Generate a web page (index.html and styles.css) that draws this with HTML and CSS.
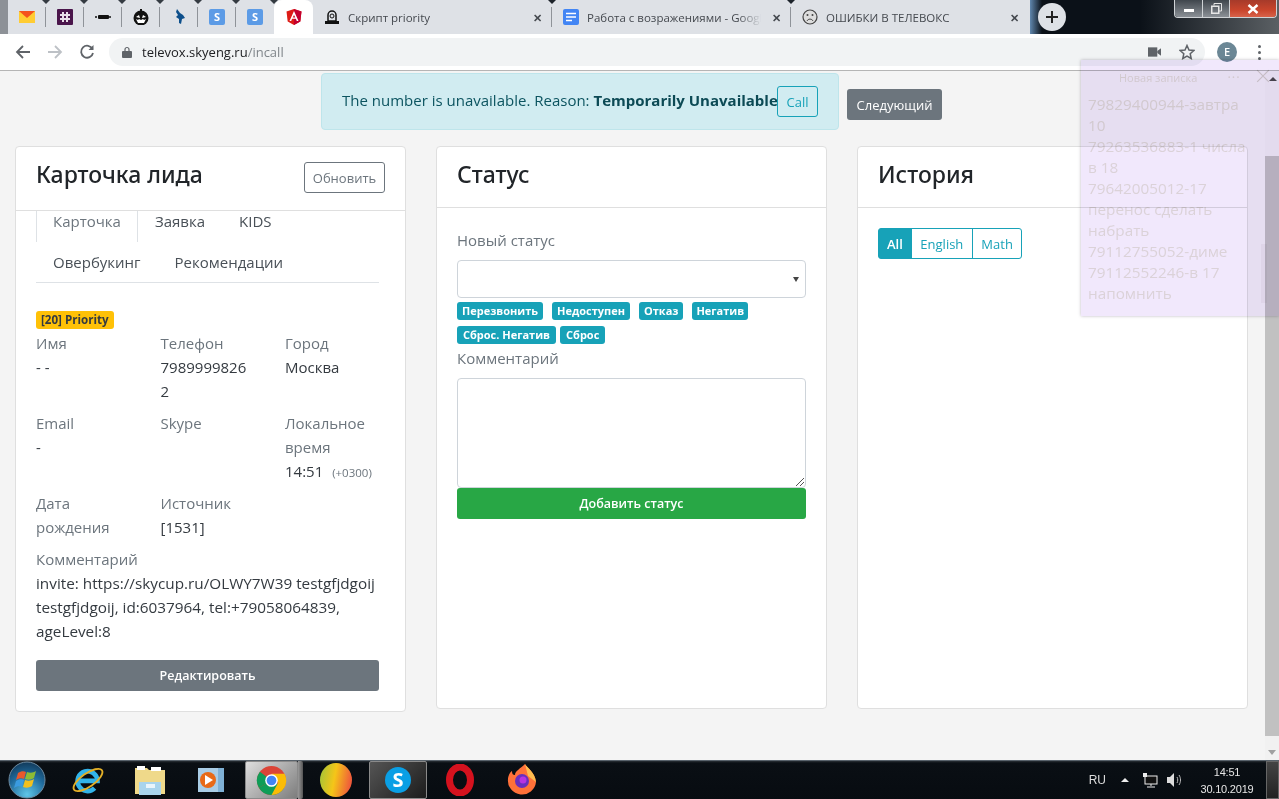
FILE: index.html
```html
<!DOCTYPE html>
<html lang="ru">
<head>
<meta charset="utf-8">
<title>televox</title>
<link rel="stylesheet" href="styles.css">
</head>
<body>
<div class="screen">
  <header class="tabstrip">
    <div class="pinned first"><svg class="fav" viewBox="0 0 16 16"><rect y="2" width="16" height="12" fill="#ffcc33"/><path d="M0 2h16L8 9z" fill="#f4511e"/></svg></div>
    <div class="pinned"><svg class="fav" viewBox="0 0 16 16"><rect width="16" height="16" rx="1" fill="#4a154b"/><path d="M3 6h10M3 10h10M6 3v10M10 3v10" stroke="#e8dfe8" stroke-width="2"/></svg></div>
    <div class="pinned"><svg class="fav" viewBox="0 0 16 16"><rect x="3" y="6" width="11" height="4" rx="1" fill="#111"/><path d="M0 8h2M14 8h2" stroke="#111" stroke-width="1.5"/></svg></div>
    <div class="pinned"><svg class="fav" viewBox="0 0 16 16"><circle cx="8" cy="9" r="7.5" fill="#111"/><path d="M3 8l3-2 1 3zM13 8l-3-2-1 3zM3 10l2 1 1-1 2 1 2-1 1 1 2-1-2 4H5z" fill="#fff"/><path d="M7 0h2v2H7z" fill="#111"/></svg></div>
    <div class="pinned"><svg class="fav" viewBox="0 0 16 16"><path d="M6 0l3 4 3 2 2 3-3 1-1 5-2-1 0-4-3-2 2-2-2-3z" fill="#0d4f8b"/></svg></div>
    <div class="pinned"><svg class="fav" viewBox="0 0 16 16"><rect width="16" height="16" rx="2" fill="#5c9be6"/><text class="s-letter" x="8" y="12">S</text></svg></div>
    <div class="pinned last"><svg class="fav" viewBox="0 0 16 16"><rect width="16" height="16" rx="2" fill="#5c9be6"/><text class="s-letter" x="8" y="12">S</text></svg></div>
    <div class="active-tab"><svg class="fav" viewBox="0 0 16 16"><path d="M8 0l7.500 2.600-1.200 10L8 16l-6.300-3.400-1.200-10z" fill="#dd1b16"/><path d="M8 0l7.500 2.600-1.200 10L8 16z" fill="#c3002f"/><path d="M8 2L3.500 12h1.700l.9-2.300h3.800l.9 2.300h1.700zM8 5.900l1.300 2.600H6.700z" fill="#fff"/></svg></div>
    <div class="tab tab-a"><svg class="fav" viewBox="0 0 16 16"><path d="M4 12V6a4 4 0 0 1 8 0v6z" fill="none" stroke="#111" stroke-width="1.500"/><circle cx="8" cy="7" r="2" fill="none" stroke="#111"/><rect x="1" y="12" width="14" height="3" fill="#111"/></svg><span class="tab-title">Скрипт priority</span><span class="tab-x">✕</span></div>
    <div class="tab tab-b"><svg class="fav" viewBox="0 0 16 16"><rect width="16" height="16" rx="2" fill="#4285f4"/><path d="M3 4.500h10M3 8h10M3 11.500h6" stroke="#fff" stroke-width="1.500"/></svg><span class="tab-title fade">Работа с возражениями - Google</span><span class="tab-x">✕</span></div>
    <div class="tab tab-c"><svg class="fav" viewBox="0 0 16 16"><circle cx="8" cy="8" r="7" fill="#ddd" stroke="#444" stroke-width="1.200"/><circle cx="5.500" cy="6" r="1" fill="#444"/><circle cx="10.500" cy="6" r="1" fill="#444"/><path d="M5 12c1-2.500 5-2.500 6 0" fill="none" stroke="#444"/></svg><span class="tab-title">ОШИБКИ В ТЕЛЕВОКС</span><span class="tab-x">✕</span></div>
    <div class="newtab"><svg viewBox="0 0 14 14" width="14" height="14"><path d="M7 1v12M1 7h12" stroke="#222" stroke-width="2"/></svg></div>
    <div class="winctl">
      <span class="wbtn wb-min"><i class="wmin"></i></span>
      <span class="wbtn wb-max"><svg viewBox="0 0 11 11" width="11" height="11"><path d="M3 2.500V.5h7.500V8H8" fill="none" stroke="#e6e6e6"/><rect x=".75" y="3.250" width="7" height="7" fill="none" stroke="#e6e6e6" stroke-width="1.500"/></svg></span>
      <span class="wbtn wclose"><svg viewBox="0 0 12 10" width="12" height="10"><path d="M1.500 1l9 8M10.500 1l-9 8" stroke="#fff" stroke-width="2.400"/></svg></span>
    </div>
  </header>

  <nav class="toolbar">
    <svg class="navicon" viewBox="0 0 16 16"><path d="M15 8H2M8 2L2 8l6 6" fill="none" stroke="#5f6368" stroke-width="1.800"/></svg>
    <svg class="navicon" viewBox="0 0 16 16"><path d="M1 8h13M8 2l6 6-6 6" fill="none" stroke="#bdc1c6" stroke-width="1.800"/></svg>
    <svg class="navicon" viewBox="0 0 16 16"><path d="M13.500 5A6 6 0 1 0 14 9" fill="none" stroke="#5f6368" stroke-width="1.800"/><path d="M14.500 1v5h-5z" fill="#5f6368"/></svg>
    <div class="omnibox">
      <svg class="lock" viewBox="0 0 10 12"><path d="M3 5V3.500a2 2 0 0 1 4 0V5" fill="none" stroke="#5f6368" stroke-width="1.200"/><rect y="5" width="10" height="7" rx="1" fill="#5f6368"/></svg>
      <span class="url"><b>televox.skyeng.ru</b>/incall</span>
      <svg class="cam" viewBox="0 0 14 10"><rect width="10" height="10" fill="#5f6368"/><path d="M10 4l4-3v8l-4-3z" fill="#5f6368"/></svg>
      <svg class="star" viewBox="0 0 16 16"><path d="M8 1.500l2 4.500 4.800.5-3.600 3.200 1 4.800L8 12l-4.200 2.500 1-4.800L1.200 6.500 6 6z" fill="none" stroke="#5f6368" stroke-width="1.500"/></svg>
    </div>
    <span class="avatar">E</span>
    <span class="dots"><i></i><i></i><i></i></span>
  </nav>

  <div class="viewport">
    <main class="page">
      <div class="alert-row">
        <div class="alert"><span>The number is unavailable. Reason: <b>Temporarily Unavailable</b></span><button class="btn-call">Call</button></div>
        <button class="btn-next">Следующий</button>
      </div>
      <div class="columns">
        <section class="card card-lead">
          <div class="card-head"><h2>Карточка лида</h2><button class="btn-refresh">Обновить</button></div>
          <div class="lead-body">
            <ul class="tabs">
              <li class="on">Карточка</li><li>Заявка</li><li>KIDS</li><li>Овербукинг</li><li>Рекомендации</li>
            </ul>
            <span class="prio">[20] Priority</span>
            <div class="fields">
              <div><label>Имя</label><p>- -</p></div>
              <div><label>Телефон</label><p>7989999826<br>2</p></div>
              <div><label>Город</label><p>Москва</p></div>
              <div><label>Email</label><p>-</p></div>
              <div><label>Skype</label></div>
              <div><label>Локальное время</label><p class="nowrap">14:51 <small>(+0300)</small></p></div>
              <div><label>Дата рождения</label></div>
              <div><label>Источник</label><p>[1531]</p></div>
            </div>
            <label>Комментарий</label>
            <p class="comment">invite: https://skycup.ru/OLWY7W39 testgfjdgoij testgfjdgoij, id:6037964, tel:+79058064839, ageLevel:8</p>
            <button class="btn-edit">Редактировать</button>
          </div>
        </section>
        <section class="card">
          <div class="card-head plain"><h2>Статус</h2></div>
          <div class="status-body">
            <label>Новый статус</label>
            <div class="select"></div>
            <div class="badges">
              <span>Перезвонить</span><span>Недоступен</span><span>Отказ</span><span class="slim">Негатив</span>
              <span class="tight">Сброс. Негатив</span><span class="wide">Сброс</span>
            </div>
            <label>Комментарий</label>
            <div class="textarea"><svg class="grip" viewBox="0 0 9 9"><path d="M9 1L1 9M9 5L5 9" stroke="#555"/></svg></div>
            <button class="btn-add">Добавить статус</button>
          </div>
        </section>
        <section class="card">
          <div class="card-head plain"><h2>История</h2></div>
          <div class="history-body">
            <div class="group"><span class="on">All</span><span>English</span><span>Math</span></div>
          </div>
        </section>
      </div>
    </main>
    <aside class="scrollbar"><div class="thumb"></div><span class="arrow"></span></aside>
  </div>

  <footer class="taskbar">
    <div class="start"><svg viewBox="0 0 38 38" width="38" height="38"><defs><radialGradient id="orb" cx=".5" cy=".9" r=".9"><stop offset="0" stop-color="#5fc6e8"/><stop offset=".6" stop-color="#1f6a9c"/><stop offset="1" stop-color="#123a5a"/></radialGradient></defs><circle cx="19" cy="19" r="18" fill="url(#orb)" stroke="#6d8aa0"/><path d="M10 12c3-2 6-2 8-1l-2 7c-2-1-5-1-8 1z" fill="#e8582c"/><path d="M19 11c3 1 6 1 9-1l-2 7c-3 2-6 2-9 1z" fill="#8cbb35"/><path d="M8 20c3-2 6-2 8-1l-2 7c-2-1-5-1-8 1z" fill="#3a9be0"/><path d="M17 19c3 1 6 1 9-1l-2 7c-3 2-6 2-9 1z" fill="#f2c01e"/></svg></div>
    <div class="task t-ie"><svg viewBox="0 0 36 36" width="34" height="34"><path d="M8 19h20a10.500 10.500 0 1 0-3 7.500" fill="none" stroke="#32b4ea" stroke-width="5"/><ellipse cx="18" cy="18" rx="18" ry="7" transform="rotate(-35 18 18)" fill="none" stroke="#e3b028" stroke-width="2"/></svg></div>
    <div class="task"><svg viewBox="0 0 32 32" width="32" height="32"><path d="M1 4h12l2 2h16v24H1z" fill="#efd98a"/><rect x="3" y="2" width="8" height="4" fill="#fff"/><rect x="17" y="3" width="10" height="4" fill="#fff"/><path d="M5 18h22v13H5z" fill="#a9d4ec"/><path d="M12 20h9v4H12z" fill="#eaf5fb"/></svg></div>
    <div class="task t-media"><svg viewBox="0 0 26 26" width="26" height="26"><rect x="3" y="1" width="23" height="24" fill="#7fb1d6"/><rect width="20" height="24" y="1" fill="#a9cde6"/><circle cx="10" cy="13" r="8" fill="#e86a17"/><path d="M7 8l8 5-8 5z" fill="#fff"/></svg></div>
    <div class="task lit chrome"><svg viewBox="0 0 32 32" width="31" height="31"><circle cx="16" cy="16" r="15" fill="#db4437"/><path d="M16 16L3 23.500A15 15 0 0 1 4 7z" fill="#0f9d58"/><path d="M16 16L3 23.500a15 15 0 0 0 13 7.500 15 15 0 0 0 13-7.500z" fill="#0f9d58"/><path d="M16 9h13.500A15 15 0 0 1 16 31l7-13z" fill="#fbbc05"/><circle cx="16" cy="16" r="6.500" fill="#fff"/><circle cx="16" cy="16" r="5" fill="#4285f4"/></svg></div>
    <div class="sliver"></div>
    <div class="task t-orb"><span class="orb"></span></div>
    <div class="task lit dark"><svg viewBox="0 0 28 28" width="28" height="28"><circle cx="14" cy="14" r="13" fill="#0a9fe5"/><text class="skype" x="14" y="21">S</text></svg></div>
    <div class="task t-opera"><svg viewBox="0 0 30 32" width="30" height="32"><ellipse cx="15" cy="16" rx="10.500" ry="13" fill="none" stroke="#d5121e" stroke-width="7"/></svg></div>
    <div class="task"><svg viewBox="0 0 30 32" width="30" height="32"><path d="M18 0c2 4 10 8 11 18a14 14 0 1 1-28-3c0-3 2-7 4-8 0 3 1 4 3 4 0-4 5-6 10-11z" fill="#ff7139"/><path d="M18 0c2 4 10 8 11 18l-8-6z" fill="#ffbd4f"/><circle cx="15" cy="17" r="7" fill="#6a2fbb"/><circle cx="16" cy="16" r="3.500" fill="#b833e1"/></svg></div>
    <div class="tray">
      <span class="lang">RU</span>
      <span class="tray-up"></span>
      <svg viewBox="0 0 16 16" width="16" height="16"><rect x="3" y="4" width="12" height="8" fill="#111" stroke="#eee"/><path d="M9 12v2M5 15h8" stroke="#eee"/><rect x="1" y="1" width="4" height="4" fill="#eee"/></svg>
      <svg viewBox="0 0 16 16" width="16" height="16"><path d="M1 5h3l4-4v14l-4-4H1z" fill="#ddd"/><path d="M11 5c1 2 1 4 0 6M13 3c2 3 2 7 0 10" fill="none" stroke="#bbb"/></svg>
      <div class="clock"><span>14:51</span><span>30.10.2019</span></div>
      <span class="show-desk"></span>
    </div>
  </footer>

  <aside class="note">
    <div class="note-head"><span>Новая записка</span><span class="note-dots">···</span><svg class="note-x" viewBox="0 0 12 12"><path d="M1 1l10 10M11 1L1 11" stroke="#cfc6cf"/></svg><span class="note-tri"></span></div>
    <p>79829400944-завтра<br>10<br>79263536883-1 числа<br>в 18<br>79642005012-17<br>перенос сделать<br>набрать<br>79112755052-диме<br>79112552246-в 17<br>напомнить</p>
    <span class="note-thumb"></span>
  </aside>
</div>
</body>
</html>
```
FILE: styles.css
```css
* { box-sizing: border-box; }
html, body { margin: 0; height: 100%; overflow: hidden; }
body { font-family: "Open Sans", "Noto Sans", sans-serif; color: #212529; }
.screen { width: 1279px; height: 799px; display: flex; flex-direction: column; position: relative; overflow: hidden; }

.tabstrip { height: 34px; flex: none; display: flex; align-items: stretch; position: relative;
  background: linear-gradient(90deg, #8d9197 0, #8d9197 8px, #dee1e6 8px, #dee1e6 1030px, #5f86ad 1030px, #0b1118 1042px, #0b1118 1140px, #5b6064 1279px); }
.fav { width: 16px; height: 16px; flex: none; }
.pinned { width: 38px; display: flex; align-items: center; justify-content: center; position: relative; }
.pinned.first { margin-left: 8px; border-top-left-radius: 8px; }
.pinned::after { content: ""; position: absolute; right: 0; top: 7px; bottom: 7px; width: 1px; background: #8f9399; }
.pinned::before { content: ""; position: absolute; right: -4px; top: 0; border: 4px solid transparent; border-top: 4px solid #343b42; border-bottom: 0; }
.pinned.last::after { display: none; }
.active-tab { width: 39px; background: #fff; border-radius: 8px 8px 0 0; display: flex; align-items: center; justify-content: center; position: relative; z-index: 1; }
.s-letter { font: 700 11px "Open Sans", sans-serif; fill: #fff; text-anchor: middle; }
.tab { display: flex; align-items: center; width: 239px; padding: 0 8px 0 11px; font-size: 11.500px; color: #45494f; position: relative; }
.tab-a::before, .tab-b::before { content: ""; position: absolute; right: -4px; top: 0; border: 4px solid transparent; border-top: 4px solid #1c232a; border-bottom: 0; }
.tab-a::after, .tab-b::after { content: ""; position: absolute; right: 0; top: 7px; bottom: 7px; width: 1px; background: #8f9399; }
.tab-c { border-radius: 0 8px 0 0; padding-right: 9px; }
.tab-title { flex: 1; margin-left: 8px; white-space: nowrap; overflow: hidden; }
.fade { margin-right: 4px; -webkit-mask-image: linear-gradient(90deg, #000 85%, transparent 98%); mask-image: linear-gradient(90deg, #000 85%, transparent 98%); }
.tab-x { font-size: 11px; font-weight: 700; color: #45494f; width: 14px; text-align: center; }
.newtab { width: 28px; height: 28px; border-radius: 50%; background: #dee1e6; display: flex; align-items: center; justify-content: center; align-self: center; margin-left: 8px; }
.winctl { margin-left: auto; margin-right: 2px; display: flex; height: 18px; border: 1px solid #cfd3d6; border-top: 0; border-radius: 0 0 4px 4px; overflow: hidden; }
.wbtn { display: flex; align-items: center; justify-content: center; background: linear-gradient(#3f464d, #8b9096); border-right: 1px solid #cfd3d6; }
.wb-min { width: 28px; }
.wb-max { width: 27px; }
.wclose { width: 46px; background: linear-gradient(#a63a2a, #c9452c 60%, #d8624a); border-right: 0; }
.wmin { width: 10px; height: 3px; background: #fff; display: block; margin-top: 3px; }

.toolbar { height: 37px; flex: none; background: #fff; display: flex; align-items: center; border-bottom: 1px solid #b5b5b5; padding-left: 15px; }
.navicon { width: 16px; height: 16px; margin-right: 16px; flex: none; }
.toolbar .navicon:nth-child(3) { margin-right: 14px; }
.omnibox { width: 1096px; height: 28px; background: #f1f3f4; border-radius: 14px; display: flex; align-items: center; padding: 0 10px 0 13px; }
.lock { width: 10px; height: 12px; }
.url { font-size: 13px; color: #80868b; margin-left: 10px; flex: 1; }
.url b { font-weight: 400; color: #202124; }
.cam { width: 13px; height: 10px; margin-right: 18px; }
.star { width: 16px; height: 16px; }
.avatar { width: 20px; height: 20px; border-radius: 50%; background: #6b8795; color: #fff; font-size: 11px; font-weight: 600; text-align: center; line-height: 20px; margin-left: 12px; }
.dots { display: flex; flex-direction: column; gap: 3px; margin-left: 21px; }
.dots i { width: 3px; height: 3px; border-radius: 50%; background: #5f6368; }

.viewport { flex: 1; min-height: 0; display: flex; background: #f4f4f4; }
.page { flex: 1; padding: 2px 15px 0; min-width: 0; }
.scrollbar { width: 14px; background: #f1f1f1; display: flex; flex-direction: column; padding-top: 85px; }
.thumb { flex: 1; background: #c1c1c1; margin-bottom: 14px; }
.arrow { width: 0; height: 0; align-self: center; border: 4px solid transparent; border-top: 5px solid #a0a0a0; border-bottom: 0; margin-bottom: 5px; }

.alert-row { display: flex; justify-content: flex-end; align-items: center; padding-right: 308px; gap: 8px; height: 57px; margin-bottom: 16px; }
.alert { width: 518px; height: 57px; background: #d1ecf1; border: 1px solid #bee5eb; border-radius: 4px; display: flex; align-items: center; padding-left: 20px; font-size: 15px; color: #0c5460; white-space: nowrap; }
.alert span { width: 435px; padding-bottom: 4px; }
.alert b { font-weight: 700; color: #0c4a55; }
.btn-call { width: 41px; height: 31px; padding: 0; background: transparent; border: 1px solid #17a2b8; border-radius: 3px; color: #17a2b8; font: 13px "Open Sans", sans-serif; }
.btn-next { width: 95px; height: 31px; padding: 0; margin-top: 6px; border: 0; border-radius: 3px; background: #6c757d; color: #fff; font: 13px "Open Sans", sans-serif; }

.columns { display: grid; grid-template-columns: repeat(3, 391px); gap: 30px; align-items: start; }
.card { background: #fff; border: 1px solid #dfdfdf; border-radius: 4px; height: 563px; }
.card-lead { height: 566px; }
.card-head { height: 64px; display: flex; align-items: center; justify-content: space-between; padding: 0 20px; border-bottom: 1px solid #dfdfdf; }
.card-head.plain { height: 61px; padding-bottom: 6px; }
h2 { margin: 0 0 10px; font-family: "Noto Sans", "Open Sans", sans-serif; font-size: 23px; font-weight: 500; }
.plain h2 { margin: 0; }
.btn-refresh { width: 81px; height: 31px; padding: 0; margin-bottom: 2px; background: #fff; border: 1px solid #6c757d; border-radius: 3px; color: #6c757d; font: 13px "Open Sans", sans-serif; }
label { display: block; font-size: 15px; line-height: 24px; color: #6c757d; }
p { margin: 0; }

.lead-body { padding: 0 26px 0 20px; font-size: 15px; line-height: 24px; color: #343a40; }
.tabs { list-style: none; margin: 0 0 28px; padding: 0; display: flex; flex-wrap: wrap; height: 72px; border-bottom: 1px solid #dee2e6; }
.tabs li { padding: 0 17px; height: 41px; line-height: 20px; color: #495057; }
.tabs li.on { border: 1px solid #dee2e6; border-width: 0 1px; padding: 0 16px; height: 31px; color: #6c757d; }
.prio { display: block; width: max-content; background: #ffc107; color: #343a40; font-size: 11.600px; font-weight: 700; line-height: 18px; padding: 0 5px; border-radius: 3px; margin-bottom: 2px; }
.fields { display: grid; grid-template-columns: 124.500px 124.500px 94px; }
.fields > div { padding: 0 15px 8px 0; }
.fields > div:nth-child(3n) { padding-right: 0; }
.nowrap { white-space: nowrap; }
.fields small { font-size: 11.500px; line-height: 1; color: #6c757d; margin-left: 5px; }
.comment { width: 343px; font-size: 15.300px; }
.btn-edit { width: 343px; height: 31px; margin-top: 17px; padding: 0; display: block; border: 0; border-radius: 3px; background: #6c757d; color: #fff; font: 600 12.500px "Open Sans", sans-serif; }

.status-body { padding: 20px 20px 0; }
.select { height: 38px; margin-top: 8px; border: 1px solid #ced4da; border-radius: 4px; position: relative; }
.select::after { content: ""; position: absolute; right: 6px; top: 16px; border: 3px solid transparent; border-top: 5px solid #444; border-bottom: 0; }
.badges { display: flex; flex-wrap: wrap; gap: 6px 9px; padding: 4px 0 2px; max-width: 300px; }
.badges span { background: #17a2b8; color: #fff; font-size: 11px; font-weight: 700; line-height: 18px; padding: 0 5px; border-radius: 3px; white-space: nowrap; }
.badges .tight { margin-right: -5px; padding: 0 6px; }
.badges .wide { padding: 0 6px; }
.badges .slim { padding: 0 4px; }
.textarea { height: 110px; margin-top: 8px; border: 1px solid #ced4da; border-radius: 4px; position: relative; }
.grip { position: absolute; right: 1px; bottom: 1px; width: 9px; height: 9px; }
.btn-add { width: 100%; height: 31px; padding: 0; display: block; border: 0; border-radius: 3px; background: #28a745; color: #fff; font: 600 12.500px "Open Sans", sans-serif; }

.history-body { padding: 20px; }
.group { display: inline-flex; }
.group span { height: 31px; line-height: 30px; padding: 0 8.500px; font-size: 13px; color: #17a2b8; border: 1px solid #17a2b8; margin-left: -1px; }
.group span:last-child { border-radius: 0 3px 3px 0; }
.group .on { background: #17a2b8; color: #fff; font-weight: 600; border-radius: 3px 0 0 3px; margin: 0; padding: 0 8px; }

.taskbar { height: 39px; flex: none; background: linear-gradient(#2a3036 0, #0a0f14 2px, #070c11 100%); display: flex; align-items: center; border-top: 1px solid #59636c; padding-left: 8px; color: #fff; }
.start { width: 38px; height: 38px; flex: none; margin-right: 11px; }
.task { width: 62px; height: 38px; display: flex; align-items: center; justify-content: center; flex: none; }
.t-media { width: 60px; }
.task.lit { margin-left: 2px; border: 1px solid #8a8a8a; border-radius: 2px; }
.chrome { width: 53px; margin-left: 4px !important; background: linear-gradient(135deg, #dedede, #7d7d7d); }
.sliver { width: 5px; height: 38px; flex: none; background: linear-gradient(90deg, #9a9a9a, #555); border-radius: 0 2px 2px 0; }
.dark { width: 58px; background: linear-gradient(135deg, #555, #1c1c1c); }
.t-orb { margin-left: 2px; }
.t-opera { margin-left: 2px; }
.orb { width: 32px; height: 34px; border-radius: 50%; background: linear-gradient(100deg, #9fc43a, #f5c518 45%, #ef5a3b 90%); }
.skype { font: 700 20px "Open Sans", sans-serif; fill: #fff; text-anchor: middle; }
.tray { margin-left: auto; display: flex; align-items: center; gap: 8px; font-size: 11px; }
.lang { margin-right: 7px; font-family: "Liberation Sans", sans-serif; font-size: 12px; color: #ddd; }
.tray-up { border: 4px solid transparent; border-bottom: 4px solid #eee; border-top: 0; margin-right: 5px; }
.clock { display: flex; flex-direction: column; align-items: center; width: 60px; margin-left: 7px; padding-top: 2px; font-family: "Liberation Sans", sans-serif; line-height: 17px; letter-spacing: -.2px; color: #e6e6e6; }
.show-desk { width: 13px; height: 38px; background: linear-gradient(#444, #222); border: 1px solid #666; margin-left: 1px; }

.note { position: absolute; left: 1081px; top: 60px; width: 198px; height: 256px; background: #f1e8fc; mix-blend-mode: multiply; box-shadow: 0 0 3px rgba(90, 80, 100, .4); color: #dbd2d8; }
.note-head { display: flex; height: 34px; align-items: center; font-size: 11px; padding-left: 38px; position: relative; }
.note-dots { margin-left: 30px; font-size: 13px; letter-spacing: 1px; }
.note-x { position: absolute; right: 9px; top: 9px; width: 14px; height: 14px; }
.note-tri { position: absolute; right: 2px; top: 17px; border: 4px solid transparent; border-bottom: 4px solid #4a4450; border-top: 0; }
.note p { padding: 0 7px; font-size: 15.300px; line-height: 21px; white-space: nowrap; }
.note-thumb { position: absolute; left: 180px; top: 184px; width: 6px; height: 59px; background: #e9dff4; }
```
